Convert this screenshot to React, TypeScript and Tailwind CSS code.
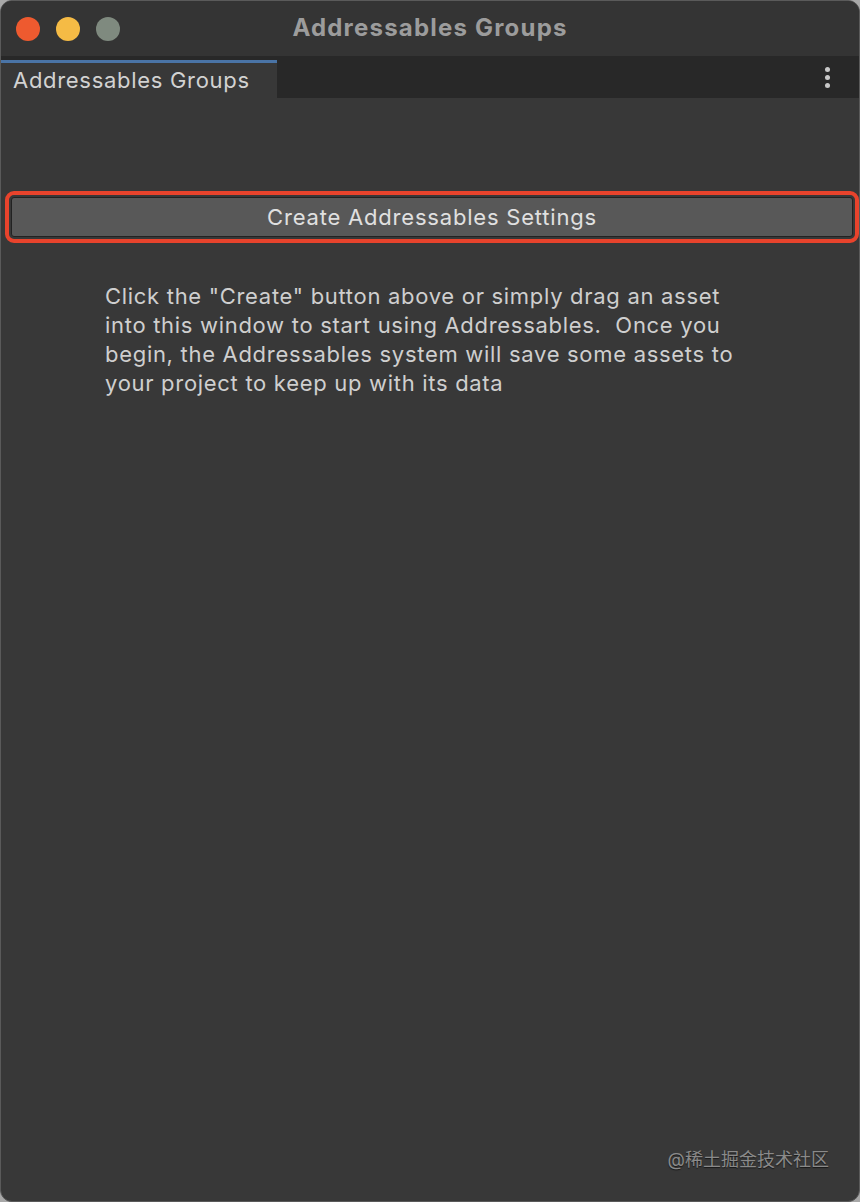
import React from "react";

export default function App() {
  const font = { fontFamily: 'Inter, "Noto Sans CJK SC", sans-serif' };
  return (
    <div className="w-[860px] h-[1202px] bg-[#a8a8a8]" style={font}>
      <div className="w-full h-full rounded-[12px] overflow-hidden border border-[#5a5a5a] bg-[#383838] flex flex-col relative">
        {/* Title bar */}
        <div className="h-[55px] bg-[#343434] flex items-center relative shrink-0">
          <div className="flex gap-[16px] pl-[15px] items-center">
            <div className="w-[24px] h-[24px] rounded-full bg-[#ee5a2f]" />
            <div className="w-[24px] h-[24px] rounded-full bg-[#f5bb45]" />
            <div className="w-[24px] h-[24px] rounded-full bg-[#7f8a7f]" />
          </div>
          <div className="absolute inset-0 flex items-center justify-center pointer-events-none">
            <span className="text-[24px] font-bold text-[#9c9c9c] tracking-[1.2px] mt-[-2px]">Addressables Groups</span>
          </div>
        </div>
        {/* Tab bar */}
        <div className="h-[42px] bg-[#282828] flex items-stretch shrink-0">
          <div className="w-[276px] mt-[4px] border-t-[3px] border-[#4a74a6] bg-[#383838] flex items-center pl-[12px]">
            <span className="text-[22px] text-[#d2d2d2] leading-none mt-[-2px] tracking-[0.7px]">Addressables Groups</span>
          </div>
          <div className="flex-1 flex justify-end items-center pr-[29px]">
            <div className="flex flex-col gap-[3px]">
              <div className="w-[5px] h-[5px] rounded-full bg-[#c8c8c8]" />
              <div className="w-[5px] h-[5px] rounded-full bg-[#c8c8c8]" />
              <div className="w-[5px] h-[5px] rounded-full bg-[#c8c8c8]" />
            </div>
          </div>
        </div>
        {/* Content */}
        <div className="flex-1 flex flex-col">
          <div className="mt-[93px] ml-[4px] mr-0 rounded-[9px] border-[4px] border-[#e8432c] px-[2px] py-[2px]">
            <div className="h-[40px] bg-[#585858] border border-[#222222] rounded-[3px] flex items-center justify-center">
              <span className="text-[22px] text-[#e0e0e0] leading-none tracking-[0.8px]">Create Addressables Settings</span>
            </div>
          </div>
          <div className="mt-[39px] pl-[104px] text-[22px] leading-[29px] text-[#cfcfcf] tracking-[0.7px]">
            Click the "Create" button above or simply drag an asset
            <br />
            into this window to start using Addressables.&nbsp; Once you
            <br />
            begin, the Addressables system will save some assets to
            <br />
            your project to keep up with its data
          </div>
        </div>
        <div className="absolute right-[30px] bottom-[28px] text-[18px] text-[#8a8a8a] [text-shadow:0_1px_1px_rgba(0,0,0,0.6)]">
          @稀土掘金技术社区
        </div>
      </div>
    </div>
  );
}
